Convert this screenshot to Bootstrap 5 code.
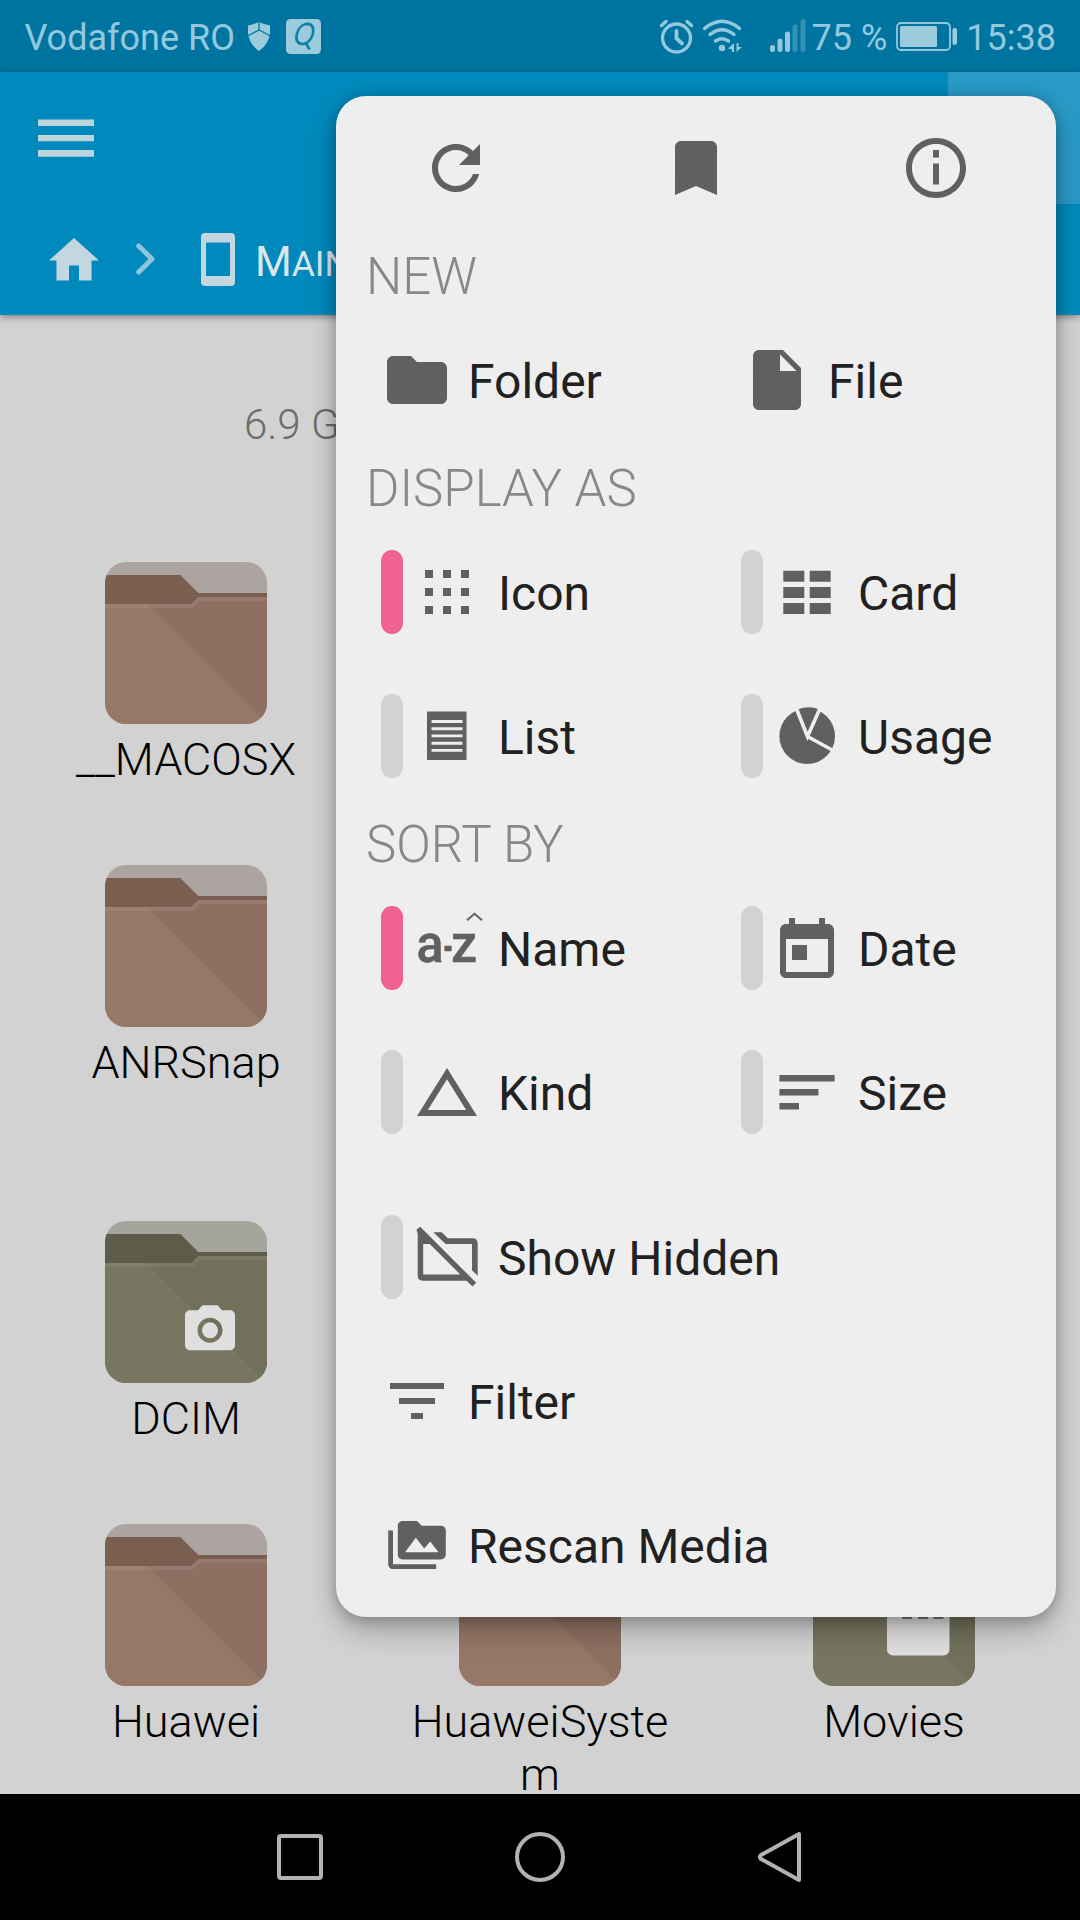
<!DOCTYPE html>
<html lang="en">
<head>
<meta charset="utf-8">
<meta name="viewport" content="width=device-width, initial-scale=1">
<title>File manager</title>
<link rel="stylesheet" href="https://cdn.jsdelivr.net/npm/bootstrap@5.3.0/dist/css/bootstrap.min.css">
<style>
  body { font-family: Roboto, "Liberation Sans", sans-serif; background: #d2d2d2; overflow: hidden; }
  .screen { width: 1080px; height: 1920px; }
  svg { display: block; flex: none; }

  .statusbar { height: 72px; background: #0074a0; color: #94c8dc; font-size: 36px; line-height: 1; padding: 0 24px 0 24.5px; }
  .statusbar span { padding-top: 3px; white-space: pre; }
  .statusbar .shield { margin-left: 12px; }
  .statusbar .badge-q { margin-left: 15px; }
  .statusbar .battery { margin: 0 7px 0 9px; }

  .appbar { height: 243px; background: #0089bc; box-shadow: 0 2px 7px rgba(0,0,0,.4); z-index: 1; }
  .toolbar-row { height: 132px; }
  .overflow-btn { width: 132px; height: 132px; background: #2999c6; }
  .crumbs { height: 111px; color: #dce5e9; font-size: 42px; line-height: 1; white-space: nowrap; padding-left: 44px; }
  .crumbs > span { padding: 4px 0 0 1px; }
  .crumbs .caps { font-size: 35.5px; text-transform: uppercase; }

  .files { background: #d2d2d2; min-height: 0; }
  .free-space { height: 247px; padding: 85px 0 0 244px; font-size: 42px; font-weight: 300; line-height: 50px; color: #6c6c6c; }
  .file-row { padding: 0 9px; height: 303px; }
  .file-row.tall { height: 356px; }
  .file-row.last { height: 270px; }
  .file-item { width: 354px; font-size: 45px; font-weight: 300; line-height: 53px; color: #000; }
  .file-name { width: 270px; margin-top: 9px; word-break: break-all; text-align: center; }
  .brown { --strip:#aca4a0; --tab:#7a5f50; --front:#977867; --shade:#8d7062; }
  .olive { --strip:#a5a49d; --tab:#5d5c49; --front:#787560; --shade:#71705a; }

  .navbar-keys { height: 126px; background: #000; }

  .popup { left: 336px; top: 96px; width: 720px; height: 1521px; border-radius: 30px; background: #eee; color: #212121;
           box-shadow: 0 14px 28px rgba(0,0,0,.24), 0 2px 14px rgba(0,0,0,.24); z-index: 5; fill: #606060; }
  .popup .actions, .popup .entry { height: 144px; }
  .popup .section { height: 68px; padding: 7px 30px 1px; font-size: 51px; font-weight: 300; line-height: 60px; color: #888; }
  .popup .entry { padding-left: 45px; font-size: 48px; line-height: 56px; white-space: nowrap; }
  .popup .entry > span:last-child { padding-top: 3px; margin-left: 15px; }
  .popup .pill { width: 22px; height: 84px; border-radius: 11px; background: #d2d2d2; margin-right: 8px; }
  .popup .pill.on { background: #f06292; }
  .spacer { height: 21px; }
</style>
<script src="https://cdn.jsdelivr.net/npm/bootstrap@5.3.0/dist/js/bootstrap.bundle.min.js"></script>
</head>
<body>

<!-- Shared folder artwork, coloured through CSS variables -->
<svg width="0" height="0" class="position-absolute">
  <defs>
    <clipPath id="tile"><rect width="162" height="162" rx="21"/></clipPath>
    <g id="folder" clip-path="url(#tile)">
      <rect width="162" height="162" style="fill:var(--strip)"/>
      <path d="M0 13H75.3L93.3 31H162V60H0z" style="fill:var(--tab)"/>
      <path d="M0 42H86.7L93.3 35H162V162H0z" style="fill:var(--front)"/>
      <path d="M42 42H86.7L93.3 35H162V162z" style="fill:var(--shade)"/>
      <path d="M0 42H86.7L93.3 35H162V39H94.5L87.5 46H0z" fill="#fff" fill-opacity=".07"/>
    </g>
  </defs>
</svg>

<main class="screen position-relative d-flex flex-column overflow-hidden">

  <header class="statusbar d-flex align-items-center flex-shrink-0">
    <span>Vodafone RO</span>
    <svg class="shield" width="24" height="72" viewBox="247 0 24 72">
      <path d="M248 25.5Q254 24.500 259 22Q264 24.500 270 25.500V33Q269 44 259 51Q249 44 248 33z" fill="#9ccbdc"/>
      <path d="M259 21V30.500M247.500 36L259 30L270.500 36" fill="none" stroke="#0074a0" stroke-width="1.300"/>
    </svg>
    <svg class="badge-q" width="36" height="72" viewBox="286 0 36 72">
      <rect x="286" y="19" width="35" height="35" rx="4.500" fill="#9ccbdc"/>
      <text transform="translate(291.500 45) skewX(-14) scale(.84 1)" font-family="Lato, sans-serif" font-size="31" fill="#0f7fa8">Q</text>
    </svg>
    <div class="d-flex align-items-center ms-auto">
      <svg width="42" height="72" viewBox="658 0 42 72" fill="none" stroke="#94c8dc" stroke-width="3.300" stroke-linecap="round">
        <circle cx="676.500" cy="38" r="14"/><path d="M676.500 31V38.500L682 43.500" stroke-width="3.800"/>
        <path d="M661.500 25.500L666 21.500M691.500 25.500L687 21.500" stroke-width="3.500"/>
      </svg>
      <svg width="70" height="72" viewBox="700 0 70 72" fill="none" stroke="#94c8dc" stroke-width="3.500" stroke-linecap="round">
        <path d="M704.500 28.500Q722 14 739.500 28.500M710 34.500Q722 25 734 34.500M715.500 41Q722 36.500 728.500 41"/>
        <circle cx="722" cy="48" r="3.200" fill="#94c8dc" stroke="none"/>
        <path d="M734 43V52H732V49.500L728 48.500zM736.500 43V52L742 47H738.500V43z" fill="#94c8dc" stroke="none"/>
      </svg>
      <svg width="42" height="72" viewBox="770 0 42 72" stroke="#94c8dc" stroke-width="5" stroke-linecap="round">
        <path d="M772.500 47.500V49.500M780 41V49.500M787.500 34V49.500"/><path d="M795 27V49.500M803 21.500V49.500" stroke-opacity=".35"/>
      </svg>
      <span>75 %</span>
      <svg class="battery" width="63" height="72" viewBox="896 0 63 72" fill="#9ccbdc">
        <rect x="897" y="23" width="53" height="27" rx="4" fill="none" stroke="#94c8dc" stroke-width="1.800"/>
        <rect x="900" y="26" width="37" height="21" rx="1.500"/><rect x="952.500" y="28" width="4.500" height="17" rx="2.200"/>
      </svg>
      <span>15:38</span>
    </div>
  </header>

  <section class="appbar position-relative flex-shrink-0">
    <div class="toolbar-row d-flex justify-content-between">
      <svg width="132" height="132" viewBox="0 72 132 132" fill="#bcd5dd"><path d="M38 119.500h56v6.500H38zM38 135h56v6.300H38zM38 150h56v6.700H38z"/></svg>
      <div class="overflow-btn"></div>
    </div>
    <div class="crumbs d-flex align-items-center">
      <svg width="60" height="111" viewBox="44 204 60 111" fill="#c2d7de"><path transform="translate(44 230.500) scale(2.500)" d="M10 20v-6h4v6h5v-8h3L12 3 2 12h3v8z"/></svg>
      <svg width="96" height="111" viewBox="104 204 96 111" fill="none" stroke="#8ec5da" stroke-width="5" stroke-linecap="round" stroke-linejoin="round"><path d="M138.700 246L152 259L138.700 272"/></svg>
      <svg width="54" height="111" viewBox="200 204 54 111" fill="#c2d7de" fill-rule="evenodd"><path d="M205 233h26q4 0 4 4v45q0 4-4 4h-26q-4 0-4-4v-45q0-4 4-4zM206 242.500v33.500h24v-33.500z"/></svg>
      <span>M<span class="caps">ain</span></span>
    </div>
  </section>

  <section class="files flex-grow-1">
    <div class="free-space">6.9 GB</div>
    <div class="file-row d-flex">
      <div class="file-item brown d-flex flex-column align-items-center"><svg width="162" height="162"><use href="#folder"/></svg><div class="file-name">__MACOSX</div></div>
    </div>
    <div class="file-row tall d-flex">
      <div class="file-item brown d-flex flex-column align-items-center"><svg width="162" height="162"><use href="#folder"/></svg><div class="file-name">ANRSnap</div></div>
    </div>
    <div class="file-row d-flex">
      <div class="file-item olive d-flex flex-column align-items-center"><svg width="162" height="162"><use href="#folder"/>
        <g transform="translate(75 79.300) scale(2.500)" fill="#dfdfdf"><circle cx="12" cy="12" r="3.200"/><path d="M9 2L7.170 4H4c-1.100 0-2 .9-2 2v12c0 1.100.9 2 2 2h16c1.100 0 2-.9 2-2V6c0-1.100-.9-2-2-2h-3.170L15 2H9zm3 15c-2.760 0-5-2.240-5-5s2.240-5 5-5 5 2.240 5 5-2.240 5-5 5z"/></g></svg>
        <div class="file-name">DCIM</div></div>
    </div>
    <div class="file-row last d-flex">
      <div class="file-item brown d-flex flex-column align-items-center"><svg width="162" height="162"><use href="#folder"/></svg><div class="file-name">Huawei</div></div>
      <div class="file-item brown d-flex flex-column align-items-center"><svg width="162" height="162"><use href="#folder"/></svg><div class="file-name">HuaweiSystem</div></div>
      <div class="file-item olive d-flex flex-column align-items-center"><svg width="162" height="162"><use href="#folder"/>
        <rect x="74" y="72" width="62.500" height="59.500" rx="6" fill="#dfdfdf"/><path d="M89 90h10v5h-10zM105 90h10v5h-10zM120.500 90h10v5h-10z" fill="#787560"/></svg>
        <div class="file-name">Movies</div></div>
    </div>
  </section>

  <footer class="navbar-keys d-flex justify-content-center flex-shrink-0">
    <svg width="240" height="126" viewBox="180 1794 240 126" fill="none" stroke="#b2b2b2" stroke-width="4"><rect x="279" y="1836" width="42" height="42" rx="2"/></svg>
    <svg width="240" height="126" viewBox="420 1794 240 126" fill="none" stroke="#b2b2b2" stroke-width="4"><circle cx="540" cy="1857" r="23"/></svg>
    <svg width="240" height="126" viewBox="660 1794 240 126" fill="none" stroke="#b2b2b2" stroke-width="4" stroke-linejoin="round"><path d="M799 1834V1880L761 1859Q759 1857 761 1855z"/></svg>
  </footer>

  <div class="popup position-absolute">
    <div class="actions d-flex">
      <div class="col-4 d-flex align-items-center justify-content-center">
        <svg width="72" height="72" viewBox="0 0 24 24"><path d="M17.650 6.350C16.200 4.900 14.210 4 12 4c-4.420 0-7.990 3.580-7.990 8s3.570 8 7.990 8c3.730 0 6.840-2.550 7.730-6h-2.080c-.82 2.330-3.040 4-5.650 4-3.310 0-6-2.690-6-6s2.690-6 6-6c1.660 0 3.140.69 4.220 1.780L13 11h7V4l-2.350 2.350z"/></svg>
      </div>
      <div class="col-4 d-flex align-items-center justify-content-center">
        <svg width="72" height="72" viewBox="0 0 24 24"><path d="M17 3H7c-1.100 0-1.990.9-1.990 2L5 21l7-3 7 3V5c0-1.100-.9-2-2-2z"/></svg>
      </div>
      <div class="col-4 d-flex align-items-center justify-content-center">
        <svg width="72" height="72" viewBox="0 0 24 24"><path d="M11 17.500h2v-7h-2v7zm1-15.500C6.480 2 2 6.480 2 12s4.480 10 10 10 10-4.480 10-10S17.520 2 12 2zm0 18c-4.410 0-8-3.590-8-8s3.590-8 8-8 8 3.590 8 8-3.590 8-8 8zM11 8.500h2V6h-2v2.500z"/></svg>
      </div>
    </div>

    <div class="section">NEW</div>
    <div class="d-flex">
      <div class="entry col-6 d-flex align-items-center">
        <svg width="72" height="72" viewBox="0 0 24 24"><path d="M10 4H4c-1.100 0-1.990.9-1.990 2L2 18c0 1.100.9 2 2 2h16c1.100 0 2-.9 2-2V8c0-1.100-.9-2-2-2h-8l-2-2z"/></svg><span>Folder</span>
      </div>
      <div class="entry col-6 d-flex align-items-center">
        <svg width="72" height="72" viewBox="0 0 24 24"><path d="M6 2c-1.100 0-1.990.9-1.990 2L4 20c0 1.100.89 2 1.990 2H18c1.100 0 2-.9 2-2V8l-6-6H6zm7 7V3.500L18.500 9H13z"/></svg><span>File</span>
      </div>
    </div>

    <div class="section">DISPLAY AS</div>
    <div class="d-flex">
      <div class="entry col-6 d-flex align-items-center">
        <span class="pill on"></span>
        <svg width="72" height="72"><path d="M14 14h8v8h-8zM32 14h8v8h-8zM50 14h8v8h-8zM14 32h8v8h-8zM32 32h8v8h-8zM50 32h8v8h-8zM14 50h8v8h-8zM32 50h8v8h-8zM50 50h8v8h-8z"/></svg><span>Icon</span>
      </div>
      <div class="entry col-6 d-flex align-items-center">
        <span class="pill"></span>
        <svg width="72" height="72"><path d="M12.300 14.700h21v11h-21zM38.700 14.700h21v11h-21zM12.300 31h21v11h-21zM38.700 31h21v11h-21zM12.300 47h21v11h-21zM38.700 47h21v11h-21z"/></svg><span>Card</span>
      </div>
    </div>
    <div class="d-flex">
      <div class="entry col-6 d-flex align-items-center">
        <span class="pill"></span>
        <svg width="72" height="72"><path d="M16 11.500h39.500v48.500H16z"/><path d="M20.500 21.500h31M20.500 28.700h31M20.500 35.900h31M20.500 43.200h31M20.500 50.400h31" stroke="#eee" stroke-width="2.900"/></svg><span>List</span>
      </div>
      <div class="entry col-6 d-flex align-items-center">
        <span class="pill"></span>
        <svg width="72" height="72"><circle cx="36.200" cy="36.200" r="27.800"/><path d="M36.500 34L24 5L30 2H46L51 5z" fill="#eee"/><path d="M36.700 33L26.500 9.500Q37.500 5 48.500 9.500z"/><path d="M24 5L36.500 36.500L50.500 5M36.500 36.500L64 51.500" fill="none" stroke="#eee" stroke-width="3.600"/></svg><span>Usage</span>
      </div>
    </div>

    <div class="section">SORT BY</div>
    <div class="d-flex">
      <div class="entry col-6 d-flex align-items-center">
        <span class="pill on"></span>
        <svg width="72" height="72" class="overflow-visible" font-size="51" font-weight="500" stroke="#606060" stroke-width=".6"><text x="5.500" y="49.500" textLength="27" lengthAdjust="spacingAndGlyphs">a</text><text x="32.500" y="52" textLength="9" lengthAdjust="spacingAndGlyphs">-</text><text x="40" y="49.500" textLength="26" lengthAdjust="spacingAndGlyphs">z</text><path d="M56 8.200L63.500 1.700L71 8.200" fill="none" stroke-width="2"/></svg><span>Name</span>
      </div>
      <div class="entry col-6 d-flex align-items-center">
        <span class="pill"></span>
        <svg width="72" height="72" viewBox="0 -1 24 24"><path d="M19 3h-1V1h-2v2H8V1H6v2H5c-1.110 0-1.990.9-1.990 2L3 19c0 1.100.89 2 2 2h14c1.100 0 2-.9 2-2V5c0-1.100-.9-2-2-2zm0 16H5V8h14v11zM7 10h5v5H7z"/></svg><span>Date</span>
      </div>
    </div>
    <div class="d-flex">
      <div class="entry col-6 d-flex align-items-center">
        <span class="pill"></span>
        <svg width="72" height="72" viewBox="0 0 24 24"><path d="M12 7.770L18.390 18H5.610L12 7.770M12 4L2 20h20L12 4z"/></svg><span>Kind</span>
      </div>
      <div class="entry col-6 d-flex align-items-center">
        <span class="pill"></span>
        <svg width="72" height="72"><path d="M8.400 19h55.200v6.500H8.400zM8.400 33h39v6.500h-39zM8.400 47h19.600v6.500H8.400z"/></svg><span>Size</span>
      </div>
    </div>

    <div class="spacer"></div>
    <div class="entry d-flex align-items-center">
      <span class="pill"></span>
      <svg width="72" height="72"><path d="M22.300 11.300H30.700L36.700 17.300H61.500Q66.700 17.300 66.700 22.500V54.700L61 49.300V23H34.700z"/><path d="M5.500 8.500L9.200 5.800L65.200 61.800L61.500 65.500L55.500 59.700H12Q6.700 59.700 6.700 54.500V13zM12.200 23V53.500H49.300L18.800 23z" fill-rule="evenodd"/></svg><span>Show Hidden</span>
    </div>
    <div class="entry d-flex align-items-center">
      <svg width="72" height="72" viewBox="0 0 24 24"><path d="M10 18h4v-2h-4v2zM3 6v2h18V6H3zm3 7h12v-2H6v2z"/></svg><span>Filter</span>
    </div>
    <div class="entry d-flex align-items-center">
      <svg width="72" height="72"><path transform="translate(7.200 7.200) scale(2.400)" d="M2 6H0v5h.01L0 20c0 1.100.9 2 2 2h18v-2H2V6zm20-2h-8l-2-2H6c-1.100 0-1.990.9-1.990 2L4 16c0 1.100.9 2 2 2h16c1.100 0 2-.9 2-2V6c0-1.100-.9-2-2-2zM7 15l4.500-6 3.500 4.510 2.500-3.010L21 15H7z"/></svg><span>Rescan Media</span>
    </div>
  </div>
</main>
</body>
</html>
